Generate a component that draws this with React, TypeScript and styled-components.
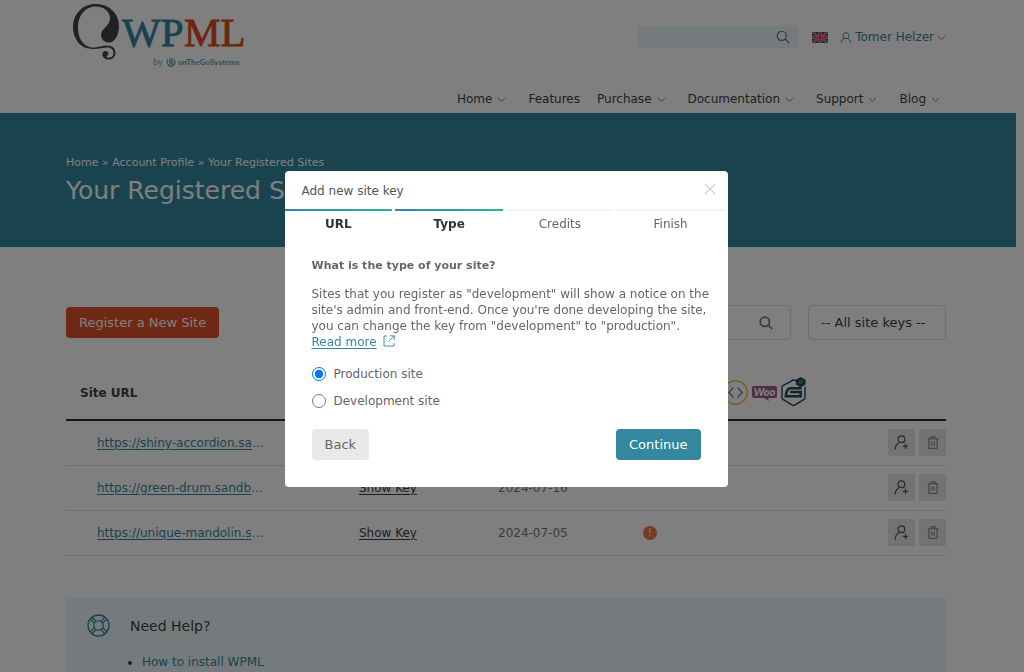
import React from "react";
import styled, { createGlobalStyle, css } from "styled-components";

const teal = "#33879e";
const ink = "#404040";

const GlobalStyle = createGlobalStyle`
  *, *::before, *::after { box-sizing: border-box; }
  body {
    margin: 0;
    overflow: hidden;
    background: #fff;
    color: ${ink};
    font: 12px/16px "DejaVu Sans", Verdana, sans-serif;
  }
  button, input, select { font: inherit; color: inherit; }
  h1, h2, p, ul { margin: 0; padding: 0; font-weight: 400; }
  svg { display: block; flex: none; }
`;

const Page = styled.div`
  height: 100vh;
  overflow: hidden;
  padding-right: 8px;
`;

const Container = styled.div`
  padding: 0 70px 0 66px;
`;

const Header = styled.header`
  height: 113px;
`;

const HeaderInner = styled(Container)`
  display: flex;
  justify-content: space-between;
`;

const LogoLink = styled.a`
  display: block;
  padding: 2px 0 0 6px;
`;

const HeaderSide = styled.div`
  display: flex;
  flex-direction: column;
  align-items: flex-end;
  padding-top: 26px;
  gap: 43px;
`;

const Tools = styled.div`
  display: flex;
  align-items: center;
`;

const SiteSearch = styled.label`
  display: flex;
  align-items: center;
  width: 161px;
  height: 22px;
  padding-right: 8px;
  margin-right: 14px;
  border-radius: 3px;
  background: #ebf6f8;
  color: #666;
`;

const BareInput = styled.input`
  flex: 1;
  min-width: 0;
  border: 0;
  outline: 0;
  background: transparent;
`;

const UserLink = styled.a`
  display: flex;
  align-items: center;
  gap: 3px;
  margin-left: 12px;
  color: ${teal};
  text-decoration: none;
`;

const Nav = styled.nav`
  display: flex;
`;

const NavLink = styled.a<{ $menu?: boolean }>`
  display: flex;
  align-items: center;
  gap: 5px;
  margin-right: ${(p) => (p.$menu ? 22 : 17)}px;
  color: ${ink};
  text-decoration: none;
  &:last-child { margin-right: 6px; }
`;

const Banner = styled.section`
  height: 134px;
  padding-top: 42px;
  background: ${teal};
  color: #fff;
`;

const Crumbs = styled.nav`
  font-size: 11px;
  a { color: inherit; text-decoration: none; }
`;

const PageTitle = styled.h1`
  margin-top: 4px;
  font-size: 25px;
  line-height: 32px;
`;

const Toolbar = styled.div`
  display: flex;
  align-items: center;
  padding-top: 58px;
`;

const Button = styled.button<{ $tone: "orange" | "teal" | "grey" }>`
  height: 31px;
  padding: 0 13px;
  border: 0;
  border-radius: 4px;
  font-size: 13px;
  ${(p) =>
    p.$tone === "grey"
      ? css`background: #e9e9e9; color: #666;`
      : css`background: ${p.$tone === "teal" ? teal : "#dd5128"}; color: #fff;`}
`;

const Field = styled.label`
  display: flex;
  align-items: center;
  width: 220px;
  height: 35px;
  margin: 0 17px 0 auto;
  padding: 0 17px;
  border: 1px solid #ddd;
  border-radius: 4px;
  color: #777;
`;

const KeyFilter = styled.select`
  appearance: none;
  width: 138px;
  height: 35px;
  padding: 0 12px;
  border: 1px solid #ddd;
  border-radius: 4px;
  background: transparent;
  font-size: 13px;
`;

const SiteTable = styled.table`
  width: 100%;
  margin-top: 26px;
  table-layout: fixed;
  border-collapse: collapse;
  th {
    height: 54px;
    padding: 0 0 0 14px;
    border-bottom: 2px solid #2a2a2a;
    text-align: left;
  }
  td {
    height: 45px;
    padding: 0;
    border-bottom: 1px solid #ddd;
    color: #777;
  }
`;

const Col = styled.col<{ $w?: number }>`
  width: ${(p) => (p.$w ? `${p.$w}px` : "auto")};
`;

const PluginIcons = styled.div`
  display: flex;
  align-items: center;
  justify-content: flex-end;
  gap: 4px;
  padding-right: 140px;
`;

const UrlCell = styled.td`
  &&& { padding-left: 31px; color: ${teal}; }
  a { color: ${teal}; text-underline-offset: 2px; }
`;

const KeyLink = styled.a`
  color: ${ink};
  text-underline-offset: 2px;
`;

const Alert = styled.span`
  display: grid;
  place-items: center;
  width: 14px;
  height: 14px;
  margin-left: 5px;
  border-radius: 50%;
  background: #ef7446;
  color: #fff;
  font-size: 10px;
  line-height: 14px;
`;

const Actions = styled.div`
  display: flex;
  justify-content: flex-end;
  gap: 4px;
`;

const IconButton = styled.button`
  display: grid;
  place-items: center;
  width: 27px;
  height: 27px;
  padding: 0;
  border: 0;
  border-radius: 2px;
  background: #e6e6e6;
  color: #555;
`;

const Help = styled.section`
  display: flex;
  gap: 20px;
  margin-top: 42px;
  padding: 16px 21px 40px;
  background: #ebf6f8;
  h2 { font-size: 14px; line-height: 24px; }
  ul { margin-top: 16px; padding-left: 12px; }
  a { color: ${teal}; text-decoration: none; }
`;

const Backdrop = styled.div`
  position: fixed;
  inset: 0;
  display: flex;
  justify-content: center;
  align-items: flex-start;
  padding: 171px 12px 0 0;
  background: rgba(0, 0, 0, 0.5);
`;

const Dialog = styled.div`
  width: 443px;
  border-radius: 4px;
  background: #fff;
  color: #666;
`;

const DialogHead = styled.div`
  display: flex;
  justify-content: space-between;
  height: 38px;
  padding: 12px 12px 0 17px;
  color: #555;
`;

const CloseButton = styled.button`
  width: 12px;
  height: 12px;
  padding: 0;
  border: 0;
  background: none;
  color: #ccc;
`;

const Steps = styled.ol`
  display: grid;
  grid-template-columns: repeat(4, 1fr);
  gap: 3px;
  margin: 0;
  padding: 0 3px 0 0;
  list-style: none;
`;

const Step = styled.li<{ $done?: boolean }>`
  text-align: center;
  &::before {
    content: "";
    display: block;
    height: 2px;
    margin-bottom: 5px;
    background: ${(p) => (p.$done ? "linear-gradient(90deg, #3087a3, #2fb395)" : "#f4f5f5")};
  }
  ${(p) => p.$done && css`color: #333; font-weight: 700;`}
`;

const DialogBody = styled.div`
  padding: 26px 27px 27px;
`;

const Question = styled.h2`
  font-size: 11px;
  line-height: 16px;
  && { font-weight: 700; }
`;

const Copy = styled.p`
  margin: 12px -16px 10px 0;
  a { margin-right: 3px; color: ${teal}; text-underline-offset: 2px; }
  svg { display: inline-block; vertical-align: -1px; color: ${teal}; }
`;

const Choice = styled.label`
  display: flex;
  align-items: center;
  gap: 8px;
  height: 27px;
  input { width: 14px; height: 14px; margin: 0; }
`;

const DialogFoot = styled.div`
  display: flex;
  justify-content: space-between;
  margin-top: 15px;
`;

const Chevron = () => (
  <svg width="9" height="9" viewBox="0 0 9 9" fill="none" stroke="#888" strokeWidth="1">
    <path d="M1 3l3.5 3.500L8 3" />
  </svg>
);

const Magnifier = ({ bold }: { bold?: boolean }) => (
  <svg width="14" height="14" viewBox="0 0 14 14" fill="none" stroke="currentColor" strokeWidth={bold ? 1.7 : 1.1}>
    <circle cx="5.800" cy="5.800" r="4.600" />
    <path d="M9.200 9.200L13.200 13" />
  </svg>
);

const Flag = () => (
  <svg width="16" height="11" viewBox="0 0 16 11">
    <path d="M0 0h16v11H0z" fill="#1b4b9e" />
    <path d="M0 0l16 11M16 0L0 11" stroke="#ddd" strokeWidth="2" />
    <path d="M0 0l16 11M16 0L0 11" stroke="#e6394f" strokeWidth="1.200" />
    <path d="M8 0v11M0 5.500h16" stroke="#ddd" strokeWidth="3.200" />
    <path d="M8 0v11M0 5.500h16" stroke="#e6394f" strokeWidth="2.200" />
  </svg>
);

const Person = () => (
  <svg width="12" height="12" viewBox="0 0 12 12" fill="none" stroke="currentColor" strokeWidth=".9">
    <circle cx="6" cy="4.700" r="3" />
    <path d="M1.200 12c.3-2.600 1.500-3.900 3.200-4.700M10.800 12c-.3-2.600-1.500-3.900-3.200-4.700" />
  </svg>
);

const AddPerson = () => (
  <svg width="15" height="15" viewBox="0 0 15 15" fill="none" stroke="currentColor" strokeWidth="1.200">
    <circle cx="7.500" cy="4.200" r="3.300" />
    <path d="M1.200 14.500c.1-4 2-6.200 4.800-7.200M9 7.300l1.300.8M11.500 8.800v5.200M8.900 11.400h5.200" />
  </svg>
);

const Bin = () => (
  <svg width="12" height="13" viewBox="0 0 12 13" fill="none" stroke="#777">
    <path d="M.8 2.800h10.400M3.800 2.500V.8h4.400v1.700M1.900 3v9.300h8.200V3M4.800 5.500v4.300M7.200 5.500v4.300" />
  </svg>
);

const Outbound = () => (
  <svg width="12" height="12" viewBox="0 0 12 12" fill="none" stroke="currentColor" strokeWidth="0.900">
    <path d="M4 1H1v10h10V8M7 .8h4.200V5M11 1L5.500 6.500" />
  </svg>
);

const Buoy = () => (
  <svg width="23" height="23" viewBox="0 0 23 23" fill="none" stroke={teal} strokeWidth="1.300">
    <circle cx="11.500" cy="11.500" r="10.500" />
    <circle cx="11.500" cy="11.500" r="4.700" />
    <path d="M3.200 5.200l4.400 4M5.200 3.200l4 4.400M19.800 5.200l-4.400 4M17.800 3.200l-4 4.400M3.200 17.800l4.400-4M5.200 19.800l4-4.400M19.800 17.800l-4.400-4M17.800 19.800l-4-4.400" />
  </svg>
);

const CodeBadge = () => (
  <svg width="25" height="25" viewBox="0 0 25 25" fill="none">
    <circle cx="12.500" cy="12.500" r="11.700" stroke="#f0b040" strokeWidth="1.400" />
    <path d="M10.500 7.500l-4.800 5 4.800 5M14.500 7.500l4.800 5-4.800 5" stroke="#777" strokeWidth="1.200" />
  </svg>
);

const WooBadge = () => (
  <svg width="25" height="16" viewBox="0 0 25 16">
    <path d="M2 1h21q2 0 2 2v8q0 2-2 2h-7l1 3-5-3H2q-2 0-2-2V3q0-2 2-2z" fill="#9b5c8f" />
    <text x="12.500" y="11" textAnchor="middle" fontFamily="Lato, sans-serif" fontWeight="900" fontStyle="italic" fontSize="11" fill="#fff">Woo</text>
  </svg>
);

const GravityBadge = () => (
  <svg width="25" height="31" viewBox="0 0 26 32" fill="none" stroke="#23485a">
    <path d="M17 4.500L13 2.800 2 8.800q-1 .6-1 1.800v10.800q0 1.200 1 1.800l9.800 6q1.200.7 2.400 0l9.800-6q1-.6 1-1.800V10" strokeWidth="1.500" />
    <path d="M21.500 11.500H9.500q-4 .5-4.500 8.500h15.500v-4.500H9.500" strokeWidth="2.600" />
    <path d="M20.500.5l4.500 2.300v4.800l-4.500 2.400L16 7.600V2.800z" fill="#23485a" />
    <path d="M23 4h-3.500q-1 0-1 2h4" stroke="#8aa" strokeWidth=".9" />
  </svg>
);

const Logo = () => (
  <svg width="172" height="68" viewBox="0 0 172 68" role="img" aria-label="WPML by onTheGoSystems">
    <path
      fill="#48424c"
      d="M15 46.500C6 43.500 1 34.500 1 25 1 12 10.500 2 23.500 2 37 2 47 11 47 24c0 9.500-4.300 16.500-10 16.500-4.500 0-8-3-8-7.500 0-6.500 9-9 9-16.500C38 9.500 32 4.500 24 4.500 13 4.500 6 14 6 25.500c0 9 3.500 17 11.500 19.500 6 1.700 11.500-1.500 18-1.500 5 0 8 3.300 8 7.200 0 4-3 6.800-6.700 6.800-3.800 0-6.300-2.300-6.300-5.100 0-2.200 1.400-3.400 3-3.400 1.700 0 2.800 1.100 2.800 2.500 0 1.600-1.200 2.300-2 2.700.5 1.100 1.700 1.600 2.900 1.600 2.400 0 4.300-1.900 4.300-4.700 0-3.200-2.400-5.600-6-5.600-6.500 0-12.500 3-20.500.5z"
    />
    <g fontFamily="'Liberation Serif', serif" fontSize="41" strokeWidth=".8">
      <text x="50" y="44" fill={teal} stroke={teal}>WP</text>
      <text x="112" y="44" fill="#dd4a1f" stroke="#dd4a1f">ML</text>
    </g>
    <g fontFamily="Lato, sans-serif" fontSize="8" fill="#6ba7b5">
      <text x="81" y="63" fontSize="9">by</text>
      <text x="106" y="63" fontWeight="900">onTheGoSystems</text>
    </g>
    <path
      fill="none"
      stroke="#6ba7b5"
      strokeWidth="1.100"
      d="M96 57.500q-2 2 0 4.500t6 0q2-2.500 0-4.500M98 56.500q-1.500 2.500 1 5.500M100.500 56.500q1.500 2.500-1 5.500M99.200 56v6M95 60q1 4.500 4.200 4.500t4.200-4.500"
    />
  </svg>
);

const menu: [string, boolean][] = [
  ["Home", true],
  ["Features", false],
  ["Purchase", true],
  ["Documentation", true],
  ["Support", true],
  ["Blog", true],
];

const sites = [
  { url: "https://shiny-accordion.sa", date: "2024-07-18", alert: false },
  { url: "https://green-drum.sandb", date: "2024-07-16", alert: false },
  { url: "https://unique-mandolin.s", date: "2024-07-05", alert: true },
];

export default function App() {
  return (
    <>
      <GlobalStyle />
      <Page>
        <Header>
          <HeaderInner>
            <LogoLink href="#"><Logo /></LogoLink>
            <HeaderSide>
              <Tools>
                <SiteSearch>
                  <BareInput aria-label="Search WPML" />
                  <Magnifier />
                </SiteSearch>
                <Flag />
                <UserLink href="#"><Person />Tomer Helzer<Chevron /></UserLink>
              </Tools>
              <Nav>
                {menu.map(([label, hasMenu]) => (
                  <NavLink key={label} href="#" $menu={hasMenu}>
                    {label}
                    {hasMenu && <Chevron />}
                  </NavLink>
                ))}
              </Nav>
            </HeaderSide>
          </HeaderInner>
        </Header>
        <Banner>
          <Container>
            <Crumbs>
              <a href="#">Home</a> » <a href="#">Account Profile</a> » Your Registered Sites
            </Crumbs>
            <PageTitle>Your Registered Sites</PageTitle>
          </Container>
        </Banner>
        <Container as="main">
          <Toolbar>
            <Button $tone="orange">Register a New Site</Button>
            <Field>
              <BareInput aria-label="Search sites" />
              <Magnifier bold />
            </Field>
            <KeyFilter aria-label="Site keys">
              <option>-- All site keys --</option>
            </KeyFilter>
          </Toolbar>
          <SiteTable>
            <colgroup>
              <Col $w={293} />
              <Col $w={139} />
              <Col $w={140} />
              <Col />
              <Col $w={98} />
            </colgroup>
            <thead>
              <tr>
                <th>Site URL</th>
                <th />
                <th />
                <th colSpan={2}>
                  <PluginIcons>
                    <CodeBadge />
                    <WooBadge />
                    <GravityBadge />
                  </PluginIcons>
                </th>
              </tr>
            </thead>
            <tbody>
              {sites.map((s) => (
                <tr key={s.url}>
                  <UrlCell><a href="#">{s.url}</a>…</UrlCell>
                  <td><KeyLink href="#">Show Key</KeyLink></td>
                  <td>{s.date}</td>
                  <td>{s.alert && <Alert>!</Alert>}</td>
                  <td>
                    <Actions>
                      <IconButton aria-label="Add user"><AddPerson /></IconButton>
                      <IconButton aria-label="Delete site"><Bin /></IconButton>
                    </Actions>
                  </td>
                </tr>
              ))}
            </tbody>
          </SiteTable>
          <Help>
            <Buoy />
            <div>
              <h2>Need Help?</h2>
              <ul>
                <li><a href="#">How to install WPML</a></li>
              </ul>
            </div>
          </Help>
        </Container>
      </Page>
      <Backdrop>
        <Dialog role="dialog" aria-modal="true" aria-labelledby="dialog-title">
          <DialogHead>
            <span id="dialog-title">Add new site key</span>
            <CloseButton aria-label="Close">
              <svg width="12" height="12" viewBox="0 0 12 12" stroke="currentColor" strokeWidth="1.200">
                <path d="M.8.800l10.400 10.400M11.200.800L.800 11.200" />
              </svg>
            </CloseButton>
          </DialogHead>
          <Steps>
            <Step $done>URL</Step>
            <Step $done>Type</Step>
            <Step>Credits</Step>
            <Step>Finish</Step>
          </Steps>
          <DialogBody>
            <Question>What is the type of your site?</Question>
            <Copy>
              Sites that you register as "development" will show a notice on the site's admin and
              front-end. Once you're done developing the site, you can change the key from
              "development" to "production".
              <br />
              <a href="#">Read more</a> <Outbound />
            </Copy>
            <Choice>
              <input type="radio" name="site-type" defaultChecked />
              Production site
            </Choice>
            <Choice>
              <input type="radio" name="site-type" />
              Development site
            </Choice>
            <DialogFoot>
              <Button $tone="grey">Back</Button>
              <Button $tone="teal">Continue</Button>
            </DialogFoot>
          </DialogBody>
        </Dialog>
      </Backdrop>
    </>
  );
}
